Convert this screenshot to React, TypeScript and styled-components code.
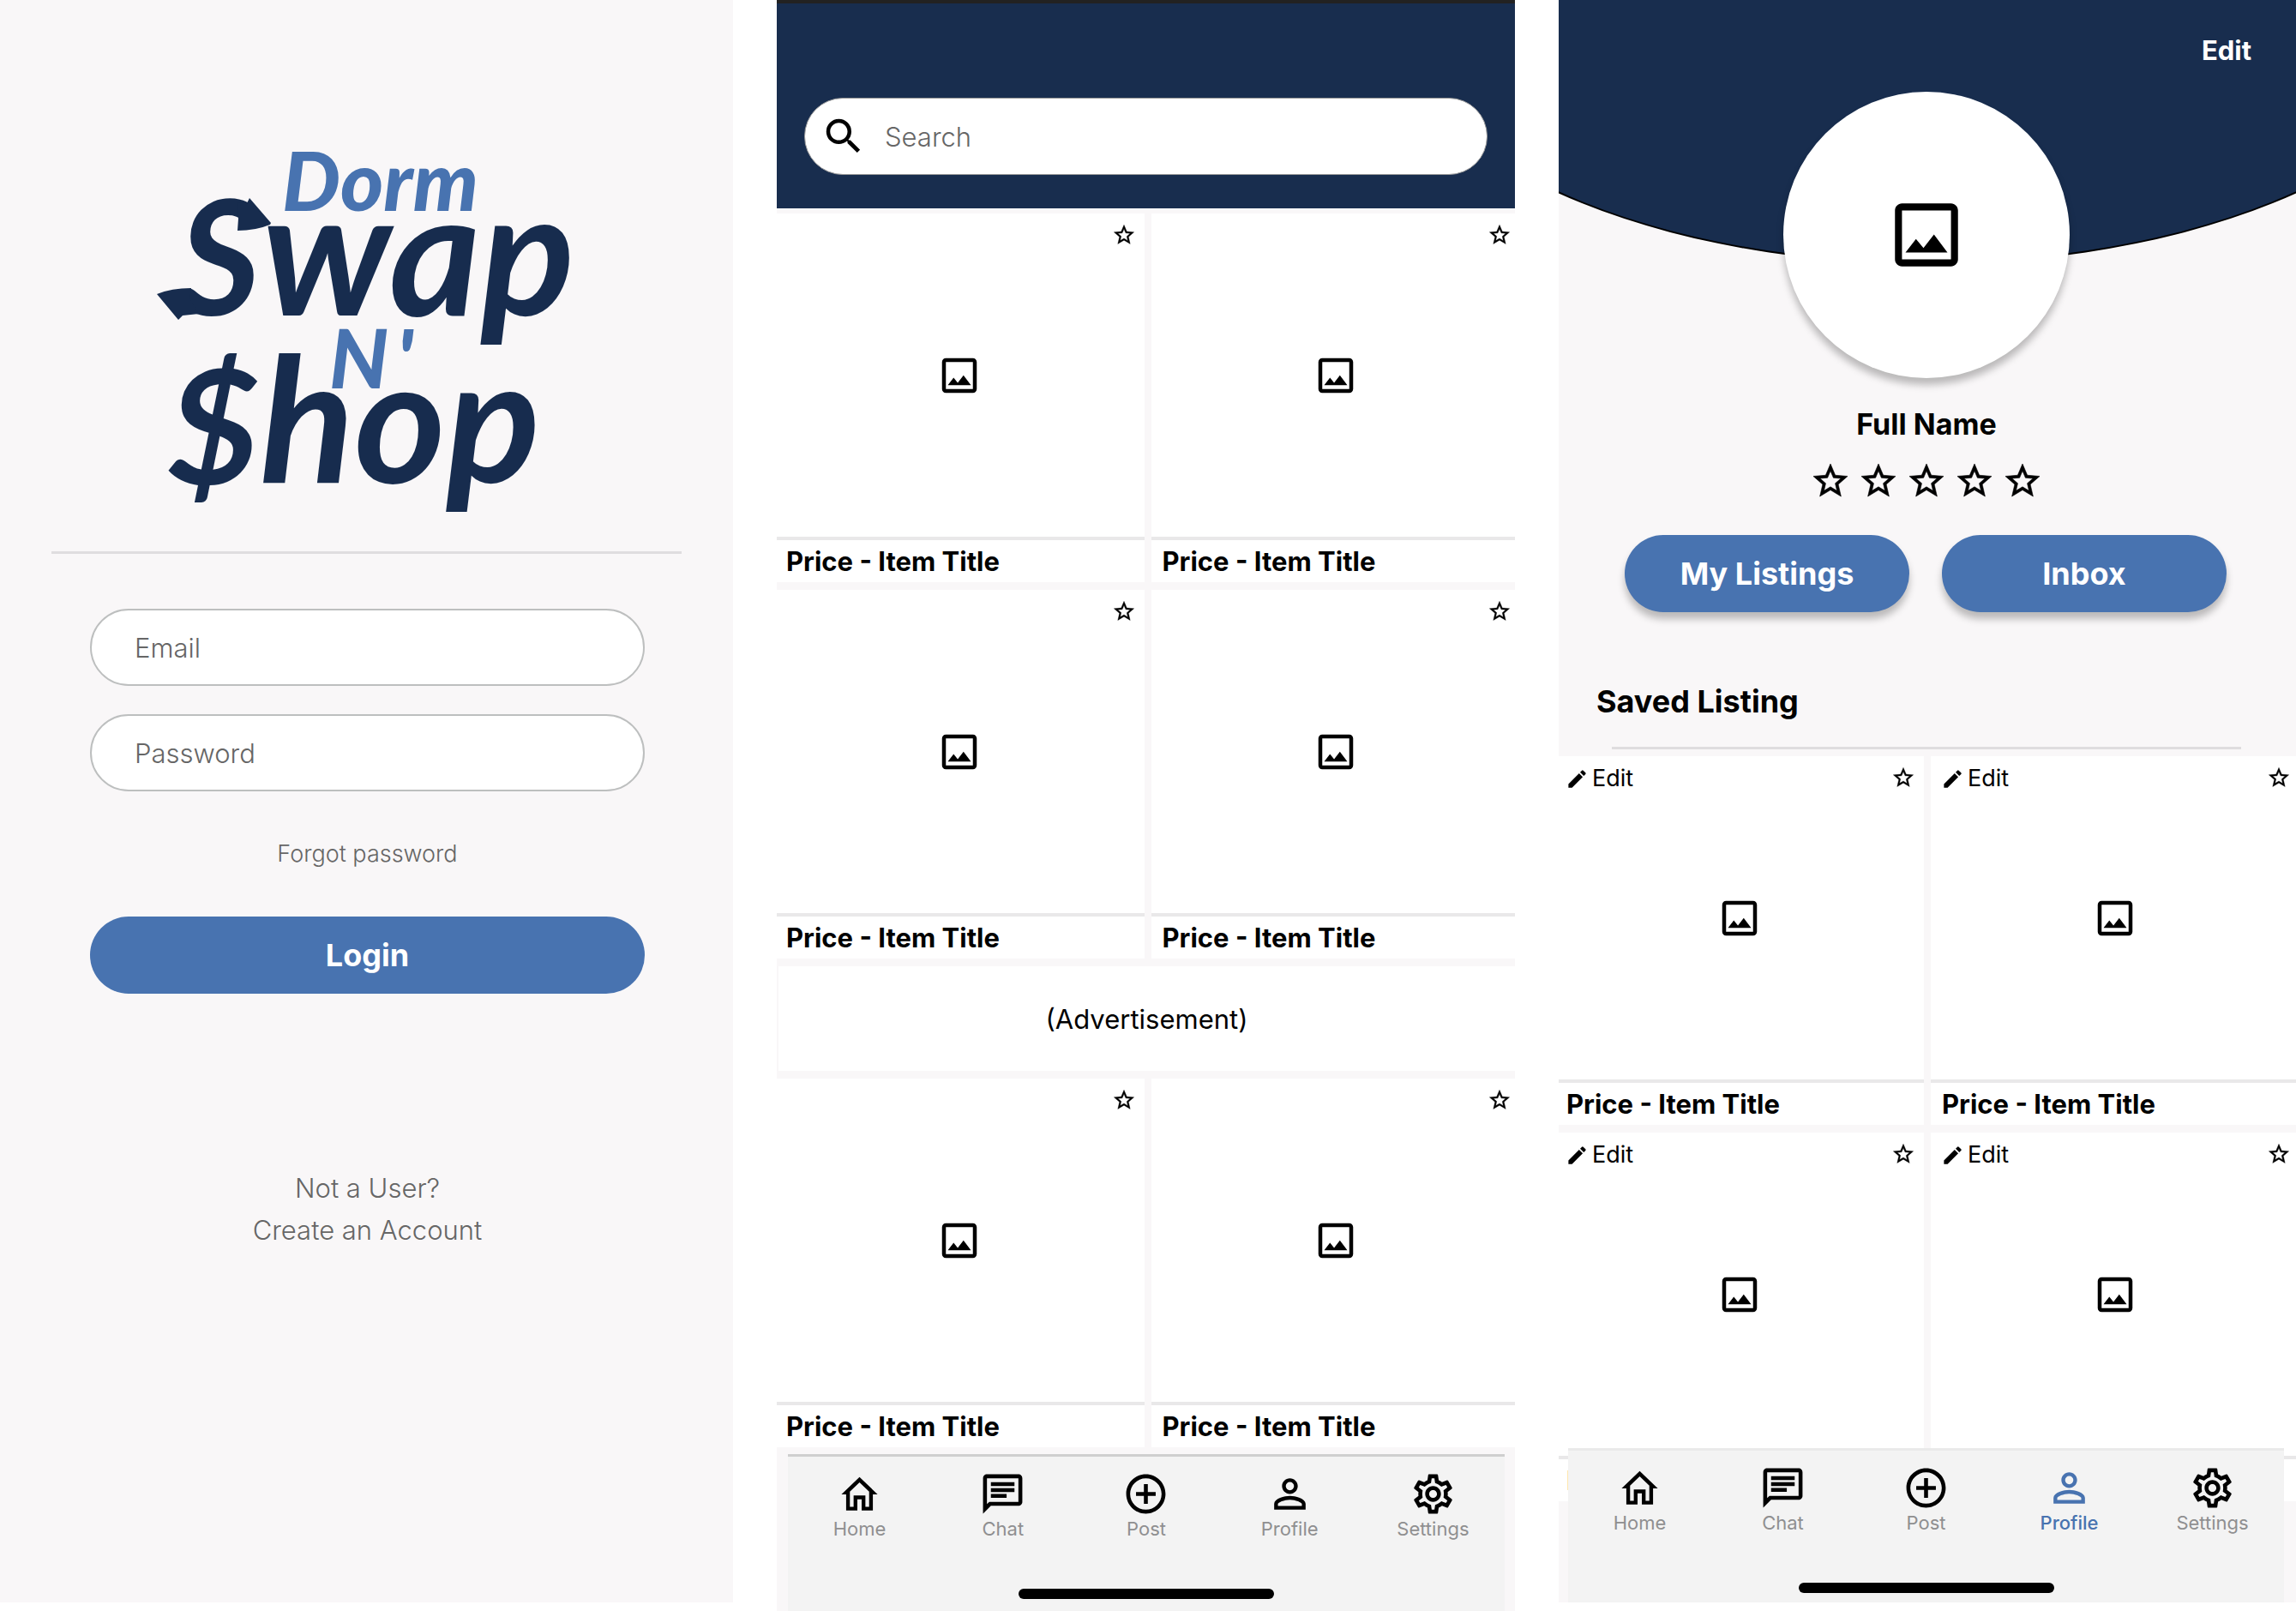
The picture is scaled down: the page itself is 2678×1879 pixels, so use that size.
import React from 'react';
import styled, { createGlobalStyle, css } from 'styled-components';
import {
  MdOutlineChat, MdAddCircleOutline, MdOutlinePersonOutline,
  MdOutlineSettings, MdOutlineImage, MdSearch, MdStarOutline, MdEdit,
} from 'react-icons/md';

const navy = '#182d4e';
const blue = '#4873b0';
const paper = '#f9f7f8';
const rule = '#dfdddf';
const muted = '#666';

const GlobalStyle = createGlobalStyle`
  *, *::before, *::after { box-sizing: border-box; }
  body { margin: 0; background: #fff; font-family: Inter, "Liberation Sans", sans-serif; color: #000; }
  button, input { font-family: inherit; }
  a { color: inherit; text-decoration: none; }
  h1, h2, p, ul { margin: 0; padding: 0; }
`;

const Board = styled.main`
  display: grid;
  grid-template-columns: 855fr 861fr 860fr;
  column-gap: 51px;
  min-height: 100vh;
`;

const Screen = styled.section<{ $short?: boolean; $inset?: number }>`
  display: flex;
  flex-direction: column;
  min-width: 0;
  overflow: hidden;
  position: relative;
  background: ${paper};
  margin-bottom: ${p => (p.$short ? '10px' : '0')};
  padding-right: ${p => p.$inset ?? 0}px;
`;

const Pill = css`
  height: 90px;
  border-radius: 45px;
`;

const PillButton = styled.button<{ $raised?: boolean }>`
  ${Pill}
  flex: 1;
  border: 0;
  padding: 0;
  background: ${blue};
  color: #fff;
  font-size: 36px;
  line-height: 40px;
  font-weight: 700;
  box-shadow: ${p => (p.$raised ? '0 8px 8px rgba(0, 0, 0, 0.25)' : 'none')};
`;

/* ---- Login ---- */

const Brand = styled.h1`
  display: flex;
  height: 643px;
`;

const Divider = styled.hr`
  width: 100%;
  height: 3px;
  margin: 0;
  border: 0;
  background: ${rule};
`;

const LoginRule = styled.div`
  padding: 0 60px;
`;

const LoginForm = styled.form`
  display: flex;
  flex-direction: column;
  padding: 64px 103px 0 105px;
`;

const FieldStack = styled.div`
  display: flex;
  flex-direction: column;
  gap: 33px;
`;

const Field = styled.input`
  ${Pill}
  width: 100%;
  padding: 0 50px;
  border: 2px solid #bdbfbf;
  background: #fff;
  font-size: 31px;
  font-weight: 300;
  outline: 0;
  &::placeholder { color: ${muted}; opacity: 1; }
`;

const ForgotLink = styled.a`
  align-self: center;
  margin: 53px 0;
  font-size: 27px;
  line-height: 40px;
  font-weight: 300;
  color: ${muted};
`;

const LoginRow = styled.div`
  display: flex;
`;

const SignUp = styled.p`
  margin-top: 202px;
  text-align: center;
  font-size: 31px;
  line-height: 49px;
  font-weight: 300;
  color: ${muted};
`;

/* ---- Listings ---- */

const SearchHeader = styled.header`
  padding: 110px 32px 39px;
  border-top: 4px solid #222;
  background: ${navy};
`;

const SearchBox = styled.label`
  ${Pill}
  display: flex;
  align-items: center;
  gap: 21px;
  padding: 0 18px;
  border: 1px solid #999;
  background: #fff;
`;

const SearchInput = styled.input`
  flex: 1;
  min-width: 0;
  padding: 0;
  border: 0;
  outline: 0;
  background: none;
  font-size: 31px;
  font-weight: 300;
  &::placeholder { color: ${muted}; opacity: 1; }
`;

const Feed = styled.div`
  display: flex;
  flex-direction: column;
  gap: 9px;
  padding: 6px 0 0 2px;
`;

const CardGrid = styled.div`
  display: grid;
  grid-template-columns: 1fr 1fr;
  gap: 9px 8px;
  margin: 0 -6px 0 -4px;
`;

const Card = styled.article`
  display: flex;
  flex-direction: column;
  background: #fff;
`;

const Photo = styled.div`
  display: grid;
  place-items: center;
  position: relative;
  height: 377px;
`;

const IconButton = styled.button`
  display: flex;
  align-items: center;
  gap: 4px;
  position: absolute;
  top: 10px;
  height: 32px;
  padding: 0;
  border: 0;
  background: none;
  color: #000;
  font-size: 27px;
  line-height: 32px;
  font-weight: 400;
`;

const StarButton = styled(IconButton)`
  top: 9px;
  right: 10px;
`;

const EditButton = styled(IconButton)`
  left: 12px;
`;

const StarIcon = styled(MdStarOutline)`
  stroke-width: 0.3;
`;

const CardTitle = styled.h2`
  padding: 7px 13px 6px;
  border-top: 4px solid #e9e8e9;
  font-size: 31px;
  line-height: 36px;
  font-weight: 700;
`;

const Advert = styled.aside`
  display: grid;
  place-items: center;
  height: 122px;
  background: #fff;
  font-size: 31px;
`;

/* ---- Tab bar ---- */

const Tabs = styled.nav<{ $line: string; $height: number; $sides: [number, number] }>`
  position: absolute;
  left: ${p => p.$sides[0]}px;
  right: ${p => p.$sides[1]}px;
  bottom: 0;
  height: ${p => p.$height}px;
  border-top: 3px solid ${p => p.$line};
  background: #f3f3f3;
`;

const TabList = styled.ul`
  display: grid;
  grid-template-columns: repeat(5, 1fr);
  padding-top: 16px;
  list-style: none;
`;

const TabLink = styled.a<{ $active?: boolean }>`
  display: flex;
  flex-direction: column;
  align-items: center;
  color: ${p => (p.$active ? blue : '#000')};
`;

const TabLabel = styled.span<{ $active?: boolean }>`
  font-size: 22px;
  line-height: 26px;
  font-weight: ${p => (p.$active ? 500 : 400)};
  color: ${p => (p.$active ? blue : '#8f8f90')};
`;

const HomeIndicator = styled.div`
  width: 298px;
  height: 12px;
  margin: 57px auto 0;
  border-radius: 6px;
  background: #000;
`;

/* ---- Profile ---- */

const Cover = styled.div`
  position: absolute;
  left: -24%;
  right: -24%;
  top: -320px;
  height: 628px;
  border: 2px solid #000;
  border-radius: 50%;
  background: ${navy};
`;

const ProfileHeader = styled.header`
  display: flex;
  flex-direction: column;
  align-items: center;
  position: relative;
`;

const EditProfile = styled.button`
  align-self: flex-end;
  margin: 39px 50px 0 0;
  padding: 0;
  border: 0;
  background: none;
  color: #fff;
  font-size: 31px;
  line-height: 40px;
  font-weight: 700;
`;

const Avatar = styled.div`
  display: grid;
  place-items: center;
  width: 334px;
  height: 334px;
  margin-top: 28px;
  border-radius: 50%;
  background: #fff;
  box-shadow: 0 8px 8px rgba(0, 0, 0, 0.25);
`;

const FullName = styled.h2`
  margin-top: 34px;
  font-size: 34px;
  line-height: 40px;
  font-weight: 700;
`;

const Rating = styled.div`
  display: flex;
  gap: 8px;
  margin-top: 22px;
`;

const Actions = styled.div`
  display: flex;
  align-self: stretch;
  gap: 38px;
  margin: 39px 79px 0 77px;
`;

const SavedHeading = styled.h2`
  margin: 84px 44px 0;
  font-size: 36px;
  line-height: 40px;
  font-weight: 700;
`;

const SavedRule = styled.div`
  padding: 33px 62px 8px;
`;

function Logo() {
  return (
    <svg width="855" height="643" viewBox="0 0 855 643" role="img" aria-label="Dorm Swap N' Shop" fontFamily='Lato, "Liberation Sans", sans-serif' fontStyle="italic">
      <g fill="#172c4e" fontWeight="700" fontSize="204">
        <text x="208" y="368" fontSize="186">S</text>
        <text x="306" y="368">wap</text>
        <text x="195" y="565" fontSize="186">$</text>
        <text x="303" y="563">hop</text>
        <path d="M276 236 Q284 236 288 237 L291 231 L316 260 L315 262 Q298 269 277 269 L278 255 Z" />
        <path d="M183 343 Q200 336 223 336 L221 348 L232 366 L213 368 L208 373 Z" />
      </g>
      <g fill={blue} fontWeight="900" fontSize="96">
        <text x="329" y="246">Dorm</text>
        <text x="384" y="453">N<tspan dx="9">'</tspan></text>
      </g>
    </svg>
  );
}

function HomeIcon({ size }: { size: number }) {
  return (
    <svg width={size} height={size} viewBox="0 0 24 24" fill="currentColor" fillRule="evenodd" aria-hidden="true">
      <path d="M12 3.4 2.8 12.2H5.2V20.4H10.9V14.7H13.1V20.4H18.8V12.2H21.2ZM12 6.1 16.9 10.8V18.5H15V12.8H9V18.5H7.1V10.8Z" />
    </svg>
  );
}

const tabItems = [
  { label: 'Home', Icon: HomeIcon },
  { label: 'Chat', Icon: MdOutlineChat },
  { label: 'Post', Icon: MdAddCircleOutline },
  { label: 'Profile', Icon: MdOutlinePersonOutline },
  { label: 'Settings', Icon: MdOutlineSettings },
];

interface TabBarProps {
  active?: string;
  line: string;
  height: number;
  sides: [number, number];
}

function TabBar({ active, line, height, sides }: TabBarProps) {
  return (
    <Tabs $line={line} $height={height} $sides={sides}>
      <TabList>
        {tabItems.map(({ label, Icon }) => (
          <li key={label}>
            <TabLink href="#" $active={label === active}>
              <Icon size={55} />
              <TabLabel $active={label === active}>{label}</TabLabel>
            </TabLink>
          </li>
        ))}
      </TabList>
      <HomeIndicator />
    </Tabs>
  );
}

function ListingCard({ editable }: { editable?: boolean }) {
  return (
    <Card>
      <Photo>
        {editable && <EditButton type="button"><MdEdit size={27} />Edit</EditButton>}
        <StarButton type="button" aria-label="Save listing"><StarIcon size={28} /></StarButton>
        <MdOutlineImage size={54} />
      </Photo>
      <CardTitle>Price - Item Title</CardTitle>
    </Card>
  );
}

export default function App() {
  return (
    <>
      <GlobalStyle />
      <Board>
        <Screen $short>
          <Brand><Logo /></Brand>
          <LoginRule><Divider /></LoginRule>
          <LoginForm>
            <FieldStack>
              <Field type="email" placeholder="Email" aria-label="Email" />
              <Field type="password" placeholder="Password" aria-label="Password" />
            </FieldStack>
            <ForgotLink href="#">Forgot password</ForgotLink>
            <LoginRow><PillButton type="submit">Login</PillButton></LoginRow>
            <SignUp>Not a User?<br /><a href="#">Create an Account</a></SignUp>
          </LoginForm>
        </Screen>

        <Screen>
          <SearchHeader>
            <SearchBox>
              <MdSearch size={54} />
              <SearchInput type="text" placeholder="Search" aria-label="Search" />
            </SearchBox>
          </SearchHeader>
          <Feed>
            <CardGrid>
              <ListingCard /><ListingCard /><ListingCard /><ListingCard />
            </CardGrid>
            <Advert>(Advertisement)</Advert>
            <CardGrid>
              <ListingCard /><ListingCard />
            </CardGrid>
          </Feed>
          <TabBar line="#cfcfcf" height={183} sides={[13, 12]} />
        </Screen>

        <Screen $short $inset={2}>
          <Cover />
          <ProfileHeader>
            <EditProfile type="button">Edit</EditProfile>
            <Avatar><MdOutlineImage size={98} /></Avatar>
            <FullName>Full Name</FullName>
            <Rating role="img" aria-label="No rating yet">
              {[1, 2, 3, 4, 5].map(n => <StarIcon key={n} size={48} />)}
            </Rating>
            <Actions>
              <PillButton type="button" $raised>My Listings</PillButton>
              <PillButton type="button" $raised>Inbox</PillButton>
            </Actions>
          </ProfileHeader>
          <SavedHeading>Saved Listing</SavedHeading>
          <SavedRule><Divider /></SavedRule>
          <CardGrid>
            <ListingCard editable /><ListingCard editable />
            <ListingCard editable /><ListingCard editable />
          </CardGrid>
          <TabBar active="Profile" line="#eaeaea" height={180} sides={[11, 14]} />
        </Screen>
      </Board>
    </>
  );
}
